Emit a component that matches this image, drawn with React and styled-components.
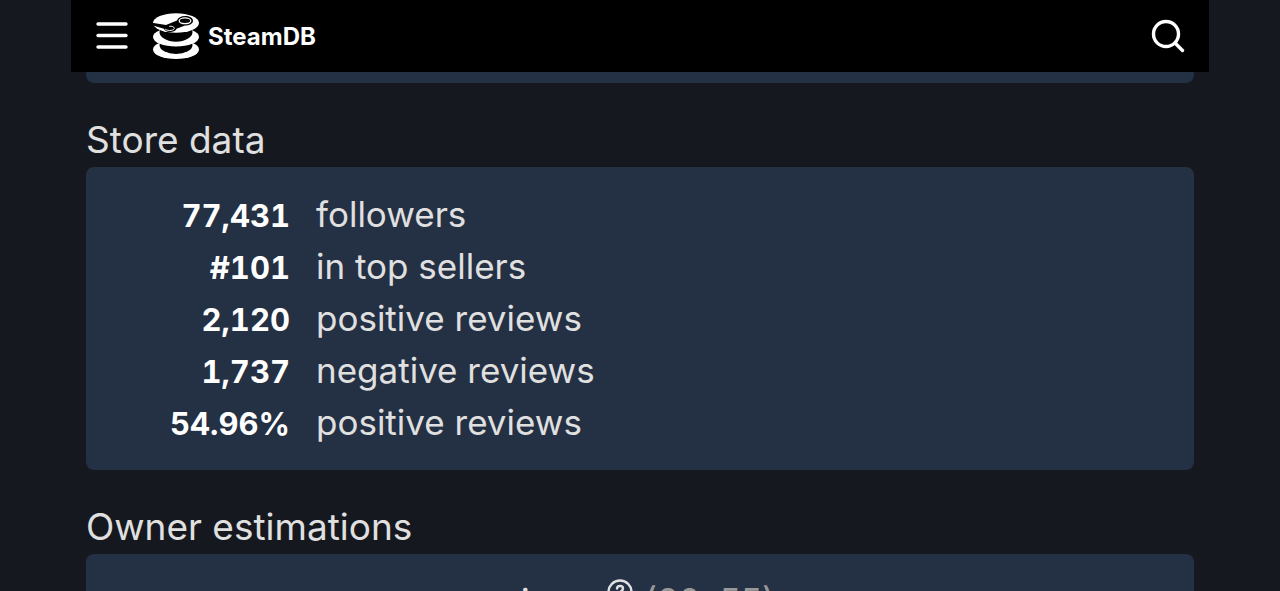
import React from 'react'
import styled, { createGlobalStyle } from 'styled-components'

const stats = [
    { value: '77,431', label: 'followers' },
    { value: '#101', label: 'in top sellers' },
    { value: '2,120', label: 'positive reviews' },
    { value: '1,737', label: 'negative reviews' },
    { value: '54.96%', label: 'positive reviews' },
]

function SteamDBLogo() {
    return (
        <svg width="48" height="48" viewBox="0 0 48 48" aria-hidden="true">
            <ellipse cx="24" cy="37.5" rx="23" ry="9.5" fill="#fff" />
            <ellipse cx="24" cy="33" rx="16.5" ry="9" fill="#000" />
            <ellipse cx="24" cy="25" rx="23" ry="9.5" fill="#fff" />
            <ellipse cx="24" cy="20" rx="16.5" ry="9.7" fill="#000" />
            <ellipse cx="24" cy="11" rx="23" ry="9.8" fill="#fff" />
            {/* arm and joints of the piston */}
            <path d="M0 10.8L14 13L25 8.5C26 5.6 29 4 33 4c4.5 0 8 2 8 4.8s-3.5 4.8-8 4.8l-8.500 3.200c-.5 2-3.500 3.200-6.500 3.200-3.200 0-5.500-1.600-6-3.200L0 13.200z" fill="#000" />
            <ellipse cx="33" cy="8.8" rx="5.8" ry="2.9" fill="none" stroke="#fff" strokeWidth="1.3" />
            <path d="M13 16.800c1.500 2.400 9.500 2.200 9.300-.6-.2-1.500-2.500-2.200-5-1.900" fill="none" stroke="#fff" strokeWidth="1" />
        </svg>
    )
}

function Header() {
    return (
        <HeaderStyled>
            <IconButton type="button" aria-label="Menu">
                <svg width="32" height="28" viewBox="0 0 32 28" fill="none" stroke="#fff" strokeWidth="3.4" strokeLinecap="round">
                    <path d="M2 2h28M2 13.5h28M2 25h28" />
                </svg>
            </IconButton>
            <Brand href="#home">
                <SteamDBLogo />
                SteamDB
            </Brand>
            <IconButton type="button" aria-label="Search">
                <svg width="34" height="34" viewBox="0 0 34 34" fill="none" stroke="#fff" strokeWidth="3.4" strokeLinecap="round">
                    <circle cx="15" cy="15" r="12.5" />
                    <path d="M24 24l7.500 7.500" />
                </svg>
            </IconButton>
        </HeaderStyled>
    )
}

function App() {
    return (
        <>
            <GlobalStyle />
            <Page>
                <Header />
                <Content>
                    <PreviousPanel />
                    <section>
                        <Title>Store data</Title>
                        <Panel>
                            {stats.map((stat) => (
                                <StatRow key={stat.value}>
                                    <strong>{stat.value}</strong>
                                    <span>{stat.label}</span>
                                </StatRow>
                            ))}
                        </Panel>
                    </section>
                    <section>
                        <Title>Owner estimations</Title>
                        <Panel>
                            <Estimate>
                                <span>reviews</span>
                                <svg width="26" height="26" viewBox="0 0 26 26" fill="none" stroke="#e0e0e0" strokeWidth="2.4" strokeLinecap="round">
                                    <circle cx="13" cy="13" r="11.5" />
                                    <path d="M10 9.5c.5-3.500 6-3 6 0 0 2.500-3 2.500-3 5M13 18.500v.2" />
                                </svg>
                                <small>(20..55)</small>
                            </Estimate>
                        </Panel>
                    </section>
                </Content>
            </Page>
        </>
    )
}

const GlobalStyle = createGlobalStyle`
* {
    box-sizing: border-box;
}
html {
    background: #16181f;
}
body {
    margin: 0;
    height: 100vh;
    overflow: hidden;
    font-family: Inter, sans-serif;
    color: #e0e0e0;
}
`

const Page = styled.div`
    margin: 0 71px;
`

const HeaderStyled = styled.header`
    display: flex;
    align-items: center;
    height: 72px;
    padding: 0 24px 0 25px;
    background: #000;
`

const IconButton = styled.button`
    display: flex;
    padding: 0;
    border: 0;
    background: none;
    cursor: pointer;
`

const Brand = styled.a`
    display: flex;
    align-items: center;
    gap: 8px;
    margin-left: 24px;
    margin-right: auto;
    font-size: 24px;
    font-weight: 700;
    color: #fff;
    text-decoration: none;
`

const Content = styled.main`
    padding: 0 15px;
`

const PreviousPanel = styled.div`
    height: 11px;
    border-radius: 0 0 8px 8px;
    background: #243043;
`

const Title = styled.h2`
    margin: 0;
    padding: 33px 0 3px;
    font-size: 37px;
    font-weight: 400;
    line-height: 48px;
`

const Panel = styled.div`
    padding: 21px 24px 22px;
    border-radius: 8px;
    background: #243043;
`

const StatRow = styled.div`
    display: grid;
    grid-template-columns: 180px 1fr;
    gap: 26px;
    align-items: baseline;
    font-size: 35px;
    font-weight: 400;
    line-height: 52px;

    strong {
        font-size: 31px;
        font-weight: 700;
        line-height: 40px;
        color: #fff;
        text-align: right;
        font-variant-numeric: tabular-nums;
    }
`

const Estimate = styled.p`
    display: flex;
    gap: 11px;
    margin: 0;
    padding-left: 359px;
    font-size: 35px;
    font-weight: 400;
    line-height: 52px;

    svg {
        margin-top: 4px;
    }

    small {
        font-size: 35px;
        color: #999;
    }
`

export default App
